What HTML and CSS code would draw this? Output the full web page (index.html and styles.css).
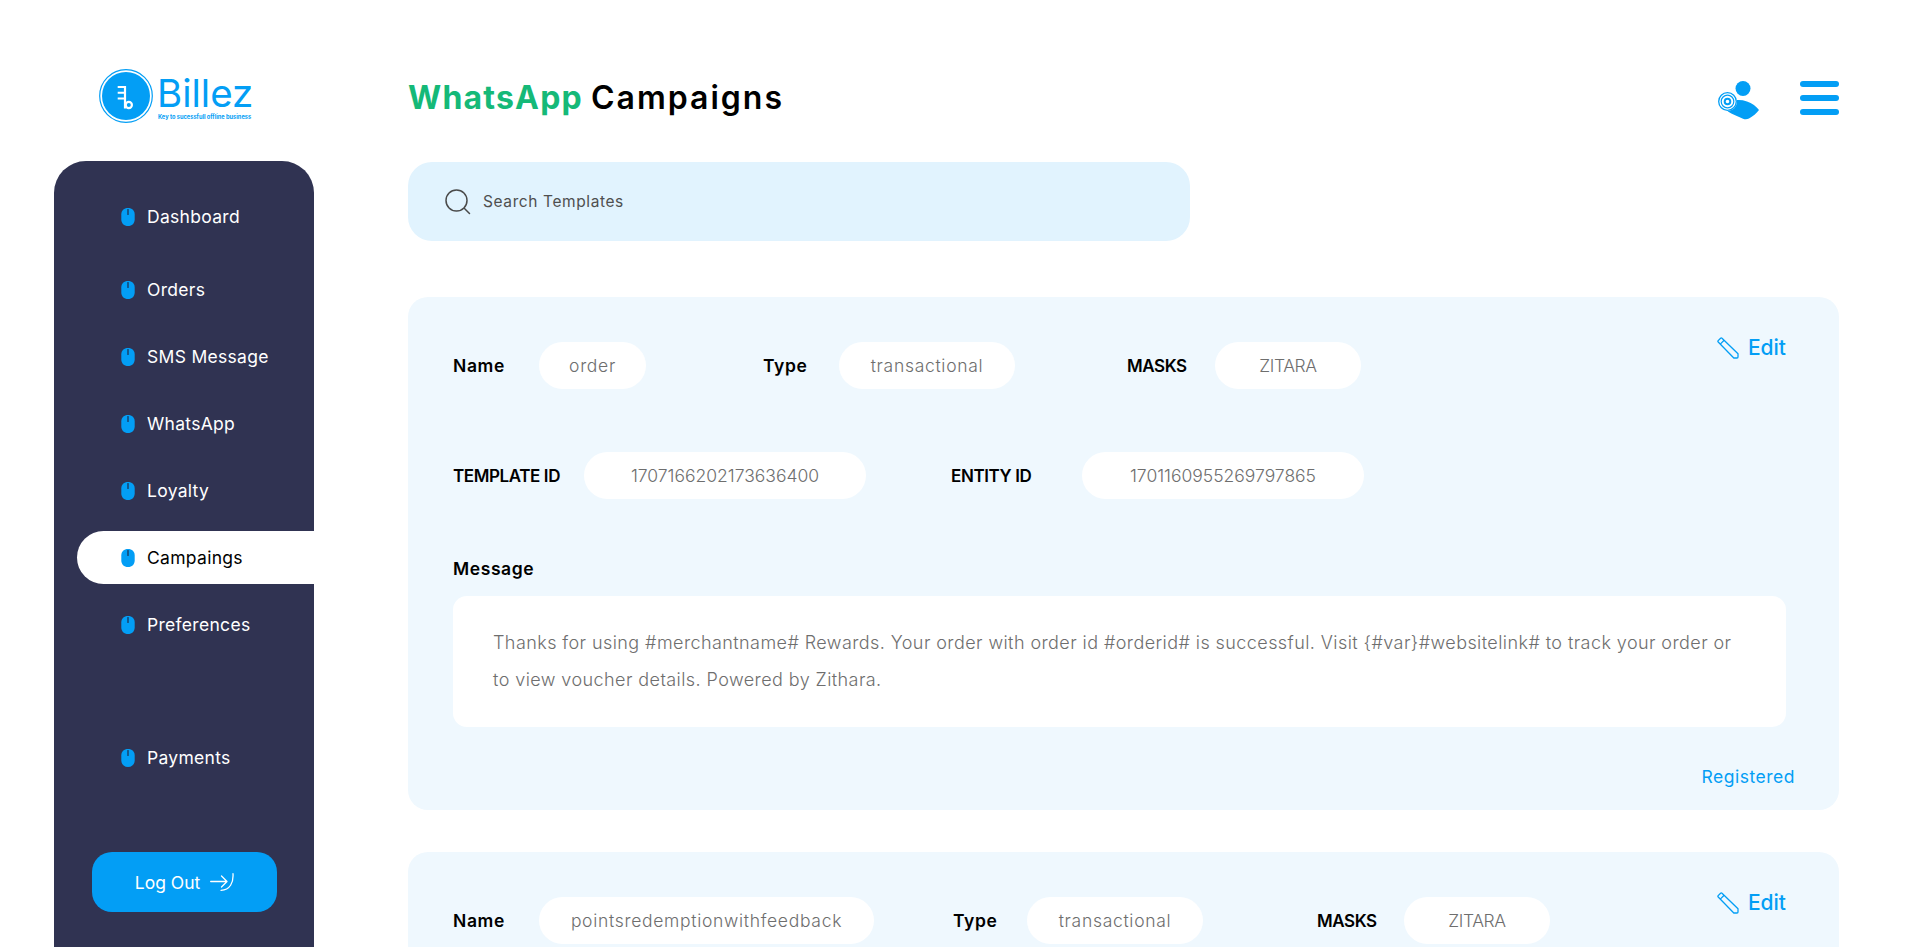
FILE: index.html
```html
<!DOCTYPE html>
<html lang="en">
<head>
<meta charset="utf-8">
<title>WhatsApp Campaigns</title>
<link rel="stylesheet" href="styles.css">
</head>
<body>
<svg class="defs" width="0" height="0" aria-hidden="true">
  <symbol id="mouse" viewBox="0 0 14 18">
    <path d="M7 0C3 0 .3 2.500.3 6.500v5C.3 15.300 3 18 7 18s6.700-2.700 6.700-6.500v-5C13.700 2.500 11 0 7 0z" fill="#039ef5"/>
    <path d="M7 1.500v5" stroke="#1c2a4a" stroke-width="1.200" stroke-linecap="round"/>
  </symbol>
  <symbol id="pencil" viewBox="0 0 22 22">
    <g fill="none" stroke="#039ef5" stroke-width="1.300" stroke-linejoin="round">
      <path d="M1.200 3.600 3.600 1.200a1 1 0 0 1 1.400 0L21 16.800v3.200a1 1 0 0 1-1 1h-3.200L1.200 5a1 1 0 0 1 0-1.400z"/>
      <path d="M3.300 7.100 7.100 3.300"/>
    </g>
  </symbol>
</svg>
<div class="app">
  <aside class="side-col">
    <div class="logo">
      <svg class="logo-mark" width="54" height="54" viewBox="0 0 54 54" aria-hidden="true">
        <circle cx="27" cy="27" r="26.300" fill="none" stroke="#039ef5" stroke-width="1.200"/>
        <circle cx="27" cy="27" r="24" fill="#039ef5"/>
        <g fill="none" stroke="#fff">
          <path d="M18.700 18h7.300M18.700 23.800h7.300M18.700 29.400h7.300" stroke-width="2"/>
          <path d="M26 17v22.500" stroke-width="2.200"/>
          <circle cx="29.800" cy="36" r="3.100" stroke-width="2.200"/>
        </g>
      </svg>
      <div class="logo-text">
        <div class="logo-name">Billez</div>
        <div class="logo-tag">Key to sucessfull offline business</div>
      </div>
    </div>
    <nav class="sidebar">
      <a class="nav-item"><svg class="nav-icon"><use href="#mouse"/></svg>Dashboard</a>
      <a class="nav-item nav-item-second"><svg class="nav-icon"><use href="#mouse"/></svg>Orders</a>
      <a class="nav-item"><svg class="nav-icon"><use href="#mouse"/></svg>SMS Message</a>
      <a class="nav-item"><svg class="nav-icon"><use href="#mouse"/></svg>WhatsApp</a>
      <a class="nav-item"><svg class="nav-icon"><use href="#mouse"/></svg>Loyalty</a>
      <a class="nav-item nav-item-active"><svg class="nav-icon"><use href="#mouse"/></svg>Campaings</a>
      <a class="nav-item"><svg class="nav-icon"><use href="#mouse"/></svg>Preferences</a>
      <a class="nav-item nav-item-apart"><svg class="nav-icon"><use href="#mouse"/></svg>Payments</a>
      <button class="logout">Log Out
        <svg width="24" height="18" viewBox="0 0 24 18" fill="none" stroke="#fff" stroke-width="1.300" stroke-linecap="round" stroke-linejoin="round" aria-hidden="true">
          <path d="M.7 8.500h16M11.500 3l5.500 5.500-5.500 5.500"/>
          <path d="M23 .7c.6 9-3 16.300-12 16.600"/>
        </svg>
      </button>
    </nav>
  </aside>
  <main class="main">
    <header class="topbar">
      <h1 class="title"><span class="title-accent">WhatsApp</span> <span class="title-rest">Campaigns</span></h1>
      <div class="top-actions">
        <svg class="user-icon" width="41" height="39" viewBox="0 0 41 39" aria-hidden="true">
          <circle cx="25" cy="7.500" r="7.500" fill="#039ef5"/>
          <path d="M12 21c5-2.500 11-2.500 17-.5 5 1.800 9.500 5 12 8.500-2 3-6.500 6.500-10 8.500-2 1-4 1-6 .2-5-2-11-4.500-15-7.200-2-3-1-7 2-9.500z" fill="#039ef5"/>
          <circle cx="9.500" cy="20.500" r="9.500" fill="#fff"/>
          <circle cx="9.500" cy="20.500" r="8.800" fill="none" stroke="#039ef5" stroke-width="1.300"/>
          <circle cx="9.500" cy="20.500" r="6.300" fill="none" stroke="#039ef5" stroke-width="1.200"/>
          <circle cx="9.500" cy="20.500" r="2.800" fill="none" stroke="#039ef5" stroke-width="2"/>
        </svg>
        <div class="hamburger"><span></span><span></span><span></span></div>
      </div>
    </header>
    <div class="search">
      <svg width="26" height="26" viewBox="0 0 26 26" fill="none" stroke="#4a4a4a" stroke-width="1.500" stroke-linecap="round" aria-hidden="true">
        <circle cx="11.500" cy="11.500" r="10.500"/>
        <path d="m19.500 19.500 5 5"/>
      </svg>
      <span>Search Templates</span>
    </div>
    <section class="card">
      <div class="row row-first">
        <span class="label label-name">Name</span><span class="pill pill-order">order</span>
        <span class="label label-type">Type</span><span class="pill pill-type">transactional</span>
        <span class="label label-caps label-masks">MASKS</span><span class="pill pill-masks">ZITARA</span>
        <a class="edit"><svg class="pencil"><use href="#pencil"/></svg>Edit</a>
      </div>
      <div class="row row-second">
        <span class="label label-caps label-template">TEMPLATE ID</span><span class="pill pill-id">1707166202173636400</span>
        <span class="label label-caps label-entity">ENTITY ID</span><span class="pill pill-id">1701160955269797865</span>
      </div>
      <div class="label message-label">Message</div>
      <p class="message">Thanks for using #merchantname# Rewards. Your order with order id #orderid# is successful. Visit {#var}#websitelink# to track your order or to view voucher details. Powered by Zithara.</p>
      <div class="status">Registered</div>
    </section>
    <section class="card">
      <div class="row row-first">
        <span class="label label-name">Name</span><span class="pill pill-long">pointsredemptionwithfeedback</span>
        <span class="label label-type-b">Type</span><span class="pill pill-type">transactional</span>
        <span class="label label-caps label-masks-b">MASKS</span><span class="pill pill-masks">ZITARA</span>
        <a class="edit"><svg class="pencil"><use href="#pencil"/></svg>Edit</a>
      </div>
    </section>
  </main>
</div>
</body>
</html>
```

FILE: styles.css
```css
* { box-sizing: border-box; }
html, body { margin: 0; height: 100%; overflow: hidden; background: #fff; }
body { font-family: Inter, "Noto Sans", sans-serif; color: #000; }
.defs { position: absolute; }

.app { display: flex; height: 947px; overflow: hidden; padding-left: 54px; }

.side-col { width: 260px; flex: none; display: flex; flex-direction: column; }
.logo { display: flex; align-items: flex-start; gap: 4px; height: 161px; padding: 69px 0 0 45px; }
.logo-mark { flex: none; }
.logo-text { padding-top: 4px; width: 96px; }
.logo-name { font-size: 38.500px; line-height: 40px; color: #039ef5; font-weight: 400; }
.logo-tag { font-size: 5.700px; line-height: 8px; padding-left: 1px; font-weight: 700; color: #039ef5; white-space: nowrap; }

.sidebar { flex: 1; background: #303352; border-radius: 32px 32px 0 0; padding: 29px 0 0 23px; display: flex; flex-direction: column; align-items: stretch; }
.nav-item { display: flex; align-items: center; height: 53px; padding-left: 45px; margin-bottom: 14px; border-radius: 27px 0 0 27px; font-size: 17.500px; font-weight: 420; color: #fff; letter-spacing: .3px; }
.nav-item-second { margin-top: 6px; }
.nav-item-active { background: #fff; color: #000; }
.nav-item-apart { margin-top: 66px; }
.nav-icon { width: 14px; height: 18px; margin-right: 12px; flex: none; margin-left: -1px; }
.logout { align-self: flex-start; width: 185px; height: 60px; margin: 54px 0 0 15px; border: 0; border-radius: 20px; background: #039ef5; color: #fff; font: 420 17.500px Inter, sans-serif; display: flex; align-items: center; justify-content: center; gap: 10px; }

.main { width: 1431px; margin-left: 94px; flex: none; }
.topbar { display: flex; align-items: center; justify-content: space-between; height: 54px; margin: 70px 0 38px; }
.title { margin: 0; font-size: 32px; line-height: 54px; font-weight: 600; padding-top: 2px; }
.title-accent { color: #15b978; font-weight: 700; letter-spacing: 1.200px; }
.title-rest { letter-spacing: 2px; }
.top-actions { display: flex; align-items: center; gap: 41px; }
.user-icon { display: block; margin-top: 6px; }
.hamburger { width: 39px; display: flex; flex-direction: column; gap: 8px; margin-top: 2px; }
.hamburger span { height: 6px; border-radius: 3px; background: #039ef5; }

.search { width: 782px; height: 79px; background: #e1f3fe; border-radius: 24px; display: flex; align-items: center; gap: 12px; padding-left: 37px; font-size: 15.500px; letter-spacing: .6px; color: #4f4f4f; margin-bottom: 56px; }

.card { background: #eff8fe; border-radius: 20px; padding: 45px 45px 0; height: 513px; margin-bottom: 42px; }
.row { display: flex; align-items: center; height: 47px; position: relative; }
.row-second { margin-top: 63px; }
.label { font-size: 17.500px; font-weight: 600; color: #000; flex: none; letter-spacing: .6px; }
.label-caps { font-size: 17px; letter-spacing: -.4px; }
.pill { display: flex; align-items: center; justify-content: center; height: 47px; background: #fff; border-radius: 24px; font-size: 17.500px; font-weight: 300; letter-spacing: .7px; color: #6e6e6e; flex: none; white-space: nowrap; }
.label-name { width: 86px; }
.label-type { width: 76px; margin-left: 117px; }
.label-masks { width: 88px; margin-left: 112px; }
.label-template { width: 131px; }
.label-entity { width: 131px; margin-left: 85px; }
.label-type-b { width: 74px; margin-left: 79px; }
.label-masks-b { width: 87px; margin-left: 114px; }
.pill-order { width: 107px; }
.pill-type { width: 176px; }
.pill-masks { width: 146px; letter-spacing: -.4px; }
.pill-id { width: 282px; letter-spacing: 0; }
.pill-long { width: 335px; }
.edit { position: absolute; right: 8px; top: -5px; display: flex; align-items: center; gap: 9px; color: #039ef5; font-size: 21px; font-weight: 500; line-height: 22px; }
.pencil { width: 22px; height: 22px; }
.message-label { margin-top: 57px; line-height: 26px; }
.message { margin: 14px 0 0; width: 1333px; height: 131px; background: #fff; border-radius: 14px; padding: 28px 40px 0; font-size: 18px; font-weight: 300; letter-spacing: .42px; line-height: 37px; color: #6e6e6e; }
.status { text-align: right; margin: 38px -1px 0 0; font-size: 17.500px; letter-spacing: .5px; line-height: 24px; color: #039ef5; }
```
